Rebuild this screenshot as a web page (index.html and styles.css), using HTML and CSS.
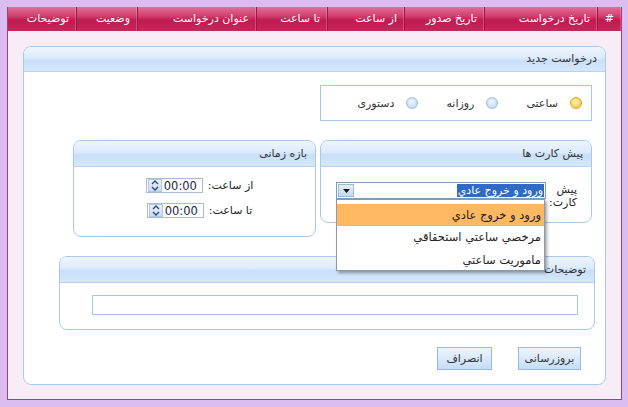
FILE: index.html
```html
<!DOCTYPE html>
<html lang="fa" dir="rtl">
<head>
<meta charset="utf-8">
<title>درخواست</title>
<link rel="stylesheet" href="styles.css">
</head>
<body>
<div class="frame">
  <div class="grid-head">
    <div class="col c-hash">#</div>
    <div class="col c-date">تاریخ درخواست</div>
    <div class="col c-issue">تاریخ صدور</div>
    <div class="col c-from">از ساعت</div>
    <div class="col c-to">تا ساعت</div>
    <div class="col c-title">عنوان درخواست</div>
    <div class="col c-status">وضعیت</div>
    <div class="col c-desc">توضیحات</div>
  </div>
  <div class="content">
    <div class="panel main">
      <div class="panel-head main-head">درخواست جدید</div>
      <div class="main-body">
        <div class="radios">
          <label class="radio-item"><span class="radio on"></span><span>ساعتی</span></label>
          <label class="radio-item"><span class="radio"></span><span>روزانه</span></label>
          <label class="radio-item"><span class="radio"></span><span>دستوری</span></label>
        </div>
        <div class="row">
          <div class="panel pk">
            <div class="panel-head">پیش کارت ها</div>
            <div class="pk-body">
              <div class="pk-label">پیش کارت:</div>
              <div class="select-wrap">
                <div class="select">
                  <span class="sel-text">ورود و خروج عادي</span>
                  <span class="sel-btn"><svg width="7" height="4" viewBox="0 0 7 4"><path d="M0 0h7L3.5 4z" fill="#111"/></svg></span>
                </div>
                <div class="dropdown">
                  <div class="dd-item active">ورود و خروج عادي</div>
                  <div class="dd-item">مرخصي ساعتي استحقاقي</div>
                  <div class="dd-item">ماموريت ساعتي</div>
                </div>
              </div>
            </div>
          </div>
          <div class="panel bz">
            <div class="panel-head">بازه زمانی</div>
            <div class="bz-body">
              <div class="time-row">
                <span class="time-label">از ساعت:</span>
                <span class="time-input"><span class="time-val">00:00</span><span class="spin"><svg width="12" height="13" viewBox="0 0 12 13"><path d="M3 5l3-3 3 3M3 8l3 3 3-3" fill="none" stroke="#2a4a7a" stroke-width="1.3"/></svg></span></span>
              </div>
              <div class="time-row">
                <span class="time-label">تا ساعت:</span>
                <span class="time-input"><span class="time-val">00:00</span><span class="spin"><svg width="12" height="13" viewBox="0 0 12 13"><path d="M3 5l3-3 3 3M3 8l3 3 3-3" fill="none" stroke="#2a4a7a" stroke-width="1.3"/></svg></span></span>
              </div>
            </div>
          </div>
        </div>
        <div class="panel desc">
          <div class="panel-head">توضیحات</div>
          <div class="desc-body"><div class="text-input"></div></div>
        </div>
        <div class="buttons">
          <button class="btn b-update">بروزرسانی</button>
          <button class="btn b-cancel">انصراف</button>
        </div>
      </div>
    </div>
  </div>
</div>
</body>
</html>
```
FILE: styles.css
```css
* { box-sizing: border-box; }
html, body { margin: 0; }
body {
  background: #dcbdf1;
  font-family: Tahoma, "DejaVu Sans", sans-serif;
  font-size: 11px;
  color: #333;
  padding: 7px 6px 6px 7px;
  width: 628px;
  height: 407px;
  overflow: hidden;
}
.frame {
  width: 615px;
  border: 1px solid #a33f79;
  border-top: 0;
  background: #f8edf7;
}
.grid-head {
  display: flex;
  height: 24px;
  background: linear-gradient(#e06f98 0%, #d03f6c 38%, #c01a50 55%, #c5285b 100%);
  color: #fff;
}
.col {
  border-left: 1px solid #9e1646;
  box-shadow: inset -1px 0 0 rgba(255,255,255,0.2);
  padding: 0 7px;
  line-height: 24px;
  white-space: nowrap;
  overflow: hidden;
}
.c-hash { width: 24px; }
.c-date { width: 113px; }
.c-issue { width: 80px; }
.c-from { width: 77px; }
.c-to { width: 71px; }
.c-title { width: 119px; }
.c-status { width: 61px; }
.c-desc { width: 68px; border-left: 0; }

.content { padding: 15px 15px 14px 15px; }

.panel {
  background: #fff;
  border: 1px solid #a9c9ec;
  border-radius: 8px;
}
.panel-head {
  height: 26px;
  line-height: 25px;
  padding: 0 8px;
  color: #333;
  background: linear-gradient(#eef5fe 0%, #dcebfc 45%, #c9dff8 55%, #d5e7fb 100%);
  border-bottom: 1px solid #b7d3f1;
  border-radius: 7px 7px 0 0;
}
.main-head { height: 25px; line-height: 24px; }

.main-body { padding: 13px 0 14px 0; }

.radios {
  width: 272px;
  height: 36px;
  margin-right: 13px;
  border: 1px solid #a9c9ec;
  display: flex;
  align-items: center;
  padding-right: 9px;
  gap: 28px;
}
.radio-item { display: flex; align-items: center; gap: 12px; color: #333; }
.radio {
  width: 12px; height: 12px;
  border-radius: 50%;
  border: 1px solid #a6bcdb;
  background: radial-gradient(circle at 45% 40%, #f2f7fe 0%, #d2e1f5 55%, #b3c9e8 100%);
}
.radio.on {
  border-color: #d9a935;
  background: radial-gradient(circle at 45% 40%, #fff6c0 0%, #fbd65e 55%, #eab22e 100%);
}

.row {
  display: flex;
  align-items: flex-start;
  gap: 4px;
  margin: 19px 13px 0 0;
}
.pk { width: 272px; position: relative; z-index: 2; }
.bz { width: 243px; }

.pk-body {
  display: flex;
  align-items: flex-start;
  gap: 3px;
  padding: 15px 14px 13px 15px;
}
.pk-label { width: min-content; line-height: 13px; color: #222; padding-top: 1px; }
.select-wrap { position: relative; flex: 1; }
.select {
  height: 17px;
  border: 1px solid #7f9db9;
  background: #fff;
  display: flex;
  align-items: stretch;
  padding: 1px;
}
.sel-text {
  background: #3169c6;
  color: #fff;
  line-height: 13px;
  padding: 0 1px;
}
.sel-btn {
  margin-right: auto;
  width: 16px;
  background: linear-gradient(#e6effc, #c4d8f3);
  border: 1px solid #9fb8dc;
  display: flex;
  align-items: center;
  justify-content: center;
}

.dropdown {
  position: absolute;
  top: 17px;
  left: 0;
  right: 1px;
  background: #fff;
  border: 1px solid #8e98a8;
  box-shadow: 2px 2px 3px rgba(0,0,0,0.35);
  padding: 4px 0 0 0;
  height: 72px;
}
.dd-item {
  height: 23px;
  line-height: 22px;
  padding: 0 3px;
  color: #222;
  font-size: 11.5px;
  white-space: nowrap;
}
.dd-item.active { background: #ffb862; height: 22px; }

.bz-body {
  display: flex;
  flex-direction: column;
  align-items: center;
  gap: 10px;
  padding: 11px 0 18px 10px;
}
.time-row { display: flex; align-items: center; gap: 5px; height: 15px; }
.time-label { color: #222; }
.time-input {
  width: 57px;
  height: 15px;
  border: 1px solid #a8bcd8;
  background: #fff;
  display: flex;
  align-items: center;
  padding: 0 1px;
}
.time-val {
  flex: 1;
  text-align: left;
  padding-left: 2px;
  color: #1d1d4a;
  font-size: 11.5px;
  direction: ltr;
}
.spin {
  width: 14px;
  height: 13px;
  background: linear-gradient(#e9f1fc, #c7daf3);
  border: 1px solid #b3c7e3;
  display: flex;
  align-items: center;
  justify-content: center;
}

.desc {
  margin: 19px 10px 0 35px;
  position: relative;
  z-index: 1;
}
.desc-body { padding: 12px 16px 14px 32px; }
.text-input {
  height: 20px;
  border: 1px solid #a9c4e4;
  background: #fff;
}

.buttons {
  display: flex;
  gap: 26px;
  margin: 17px 24px 0 0;
}
.btn {
  font: inherit;
  color: #333;
  height: 23px;
  border: 1px solid #98b9e2;
  background: linear-gradient(#eef5fe 0%, #d9e9fb 50%, #c5ddf7 100%);
  padding: 0;
  margin: 0;
}
.b-update { width: 63px; }
.b-cancel { width: 55px; }
```
